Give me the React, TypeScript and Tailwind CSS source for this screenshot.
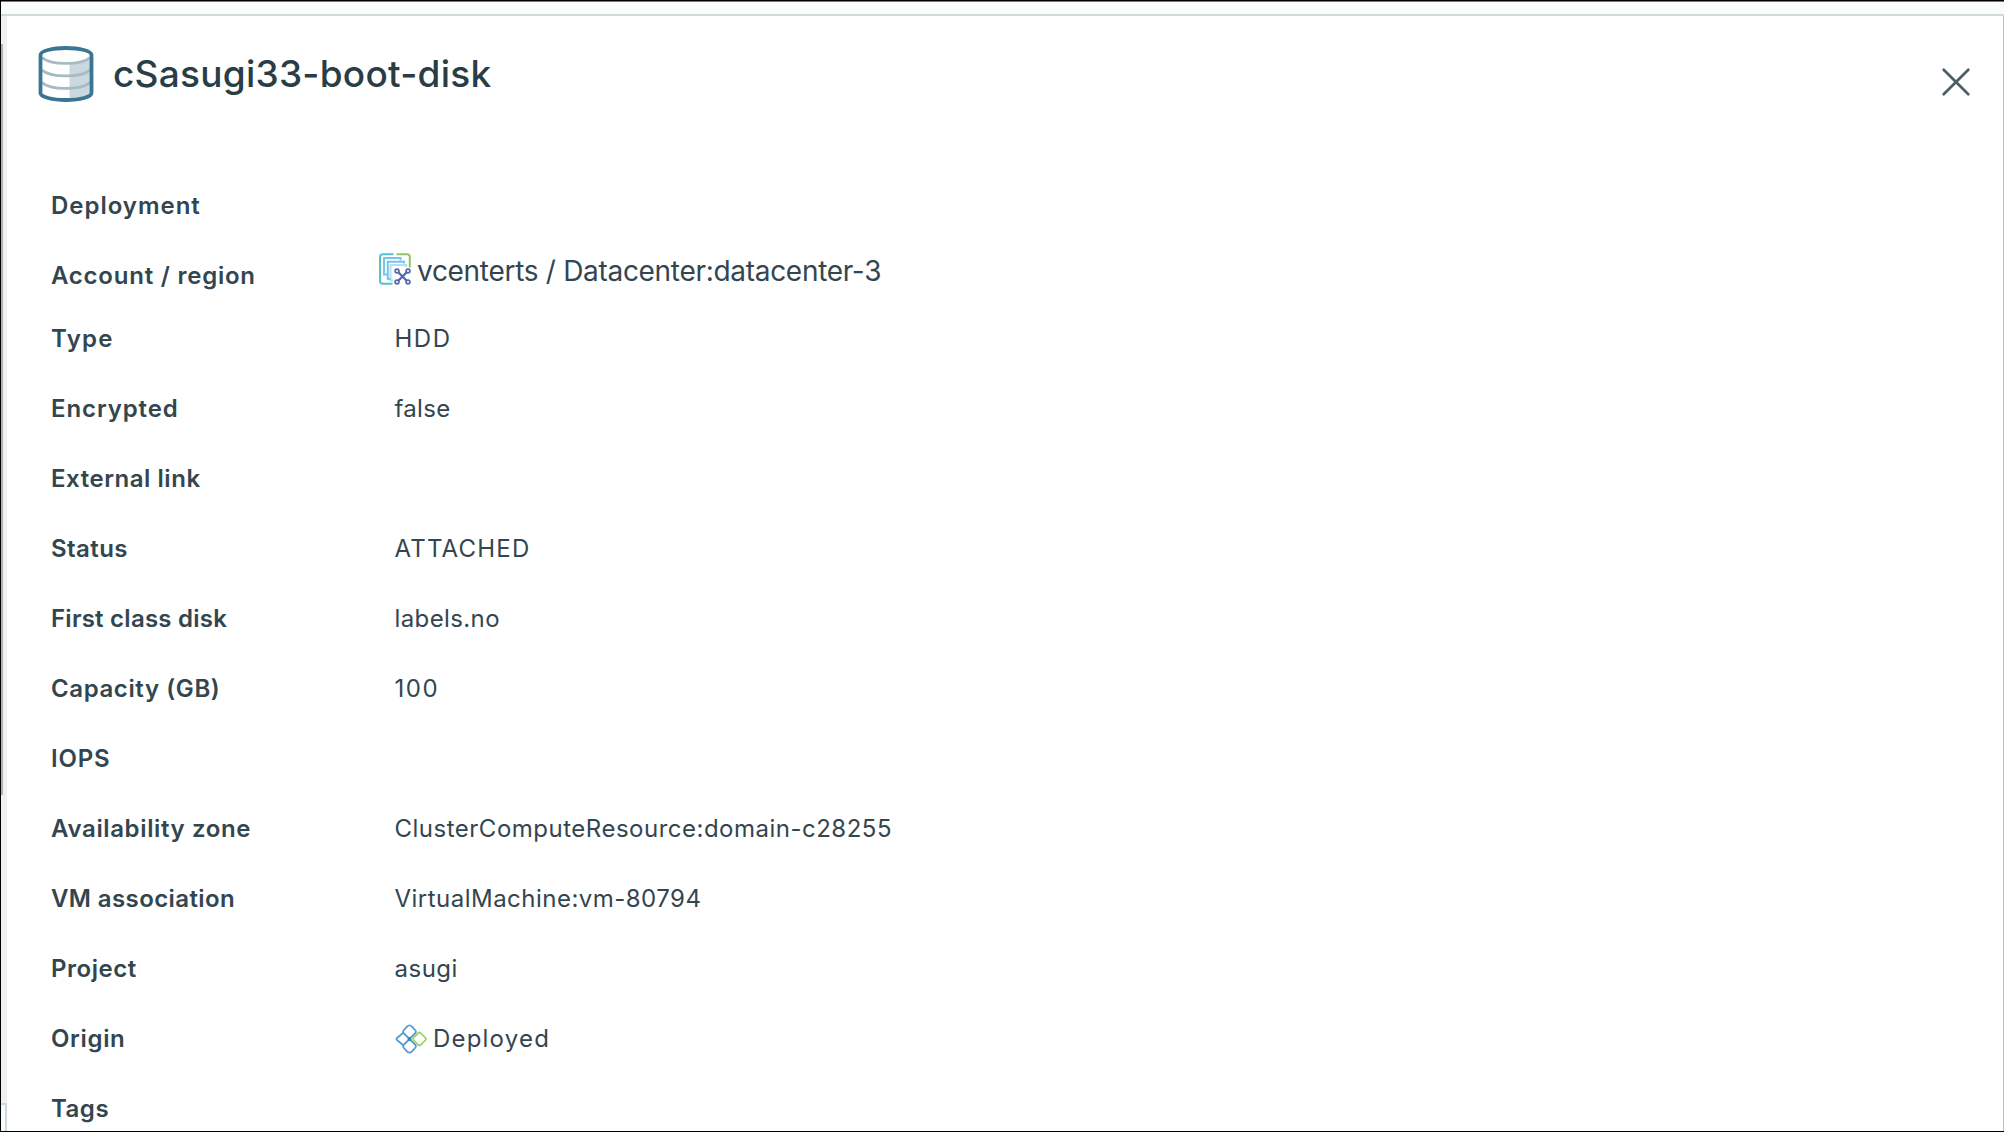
import type { ReactNode } from 'react';

function DiskIcon() {
  return (
    <svg width="56" height="56" viewBox="0 0 56 56" fill="none" className="shrink-0">
      <path d="M2.500 9C2.500 5 14 2 28 2S53.500 5 53.500 9v38c0 4-11.500 7-25.500 7S2.500 51 2.500 47Z" fill="#fff" />
      <path d="M31.500 17.200C40 16.600 48 14.600 53 11v36c-3 3.500-11 6-21.500 6.500Z" fill="#cbd8de" />
      <g stroke="#a7bbc5" strokeWidth="2.800">
        <path d="M4 11.500c4 4 13 5.900 24 5.900s20-1.900 24-5.900" />
        <path d="M4 24c4 4 13 5.900 24 5.900s20-1.900 24-5.900" />
        <path d="M4 36.500c4 4 13 5.900 24 5.900s20-1.900 24-5.900" />
      </g>
      <path d="M2.500 9C2.500 5 14 2 28 2S53.500 5 53.500 9v38c0 4-11.500 7-25.500 7S2.500 51 2.500 47Z" stroke="#3a7594" strokeWidth="3.800" />
    </svg>
  );
}

function VCenterIcon() {
  return (
    <svg width="32" height="32" viewBox="0 0 32 32" fill="none" className="shrink-0">
      <path d="M14.500 1.200H4A3 3 0 0 0 1 4.200v23.500a3 3 0 0 0 3 3h9.500" stroke="#4fc3d2" strokeWidth="2" />
      <path d="M17.500 1.200H28a2.800 2.800 0 0 1 2.800 2.800v10.500" stroke="#94c466" strokeWidth="2" />
      <g stroke="#78c4ec" strokeWidth="2">
        <path d="M21.500 7.500V5H5v16.500h3" />
        <path d="M25 10.500V8.700H8.800V26h3" />
        <path d="M27 14v-2H11.500v15.500H14" opacity=".55" />
      </g>
      <g stroke="#5468ae" strokeWidth="1.700">
        <path d="m19 19 9 9m0-9-9 9" strokeWidth="2.400" />
        <circle cx="18" cy="18" r="1.900" />
        <circle cx="29" cy="18" r="1.900" />
        <circle cx="18" cy="29" r="1.900" />
        <circle cx="29" cy="29" r="1.900" />
      </g>
    </svg>
  );
}

function DeployedIcon() {
  return (
    <svg width="32" height="30" viewBox="0 0 32 30" fill="none" strokeWidth="1.800" strokeLinejoin="round" className="shrink-0">
      <g stroke="#5a9bd0">
        <path d="M12 2.600Q14.500 0 17 2.600L20.500 6.500Q21.500 8 20.500 9L14.500 15 8.500 9Q7.500 8 8.500 6.500Z" />
        <path d="M12 27.400Q14.500 30 17 27.400L20.500 23.500Q21.500 22 20.500 21L14.500 15 8.500 21Q7.500 22 8.500 23.500Z" />
        <path d="M8.500 8.500 2 14Q1 15 2 16L8.500 21.500" />
      </g>
      <path d="M23.300 9Q24.500 8 25.700 9L30.500 14Q31.300 15 30.500 16L25.700 21Q24.500 22 23.300 21L18.500 16Q17.700 15 18.500 14Z" stroke="#98d65c" />
      <circle cx="14.500" cy="15" r="1.900" fill="#3a82bd" />
    </svg>
  );
}

function Row({ label, labelClass, children }: { label: string; labelClass: string; children?: ReactNode }) {
  return (
    <div className="flex h-[70.05px] items-center">
      <div className={`w-[343.5px] shrink-0 font-semibold ${labelClass}`}>{label}</div>
      {children}
    </div>
  );
}

export default function App() {
  return (
    <div className="flex h-[1132px] w-[2004px] flex-col overflow-hidden whitespace-nowrap border-b border-l border-t border-black bg-white font-['Inter',sans-serif] text-[24px] leading-[30px] text-[#33464f]">
      <div className="h-[15px] shrink-0 border-b-2 border-t border-b-[#cfdadf] border-t-[#777777] bg-[#fafcfb]" />
      <div className="flex min-h-0 flex-1 border-r border-[#bfbfbf]">
        <div className="flex w-[6px] shrink-0 flex-col bg-[#f1f0f1]">
          <div className="mt-7 h-[751px] w-[2px] bg-[#b5b1b3]" />
          <div className="mt-auto h-[28px] border-r-2 border-t-2 border-[#cdd9df] bg-[#f8fbfc]" />
        </div>
        <main className="flex-1">
          <header className="flex h-[155px] items-start pl-[31px] pr-[32px] pt-[30px]">
            <DiskIcon />
            <h1 className="ml-[19px] mt-[5px] flex-1 text-[37px] font-[450] leading-[46px] tracking-[0.25px] text-[#293d46]">cSasugi33-boot-disk</h1>
            <button aria-label="Close" className="mt-[20.5px]">
              <svg width="30" height="30" viewBox="0 0 30 30" stroke="#4c5d65" strokeWidth="2.700" strokeLinecap="round">
                <path d="m2.700 2.700 24.600 24.600m0-24.600-24.600 24.600" />
              </svg>
            </button>
          </header>
          <section className="pl-[44px]">
            <Row label="Deployment" labelClass="tracking-[0.97px]" />
            <div className="flex h-[62.5px] items-center">
              <div className="mt-2 w-[328px] shrink-0 font-semibold tracking-[0.77px]">Account / region</div>
              <div className="mb-[6px] flex"><VCenterIcon /></div>
              <span className="mb-[2px] ml-[6px] text-[28px] leading-[34px] tracking-[-0.3px]">vcenterts / Datacenter:datacenter-3</span>
            </div>
            <Row label="Type" labelClass="tracking-[1.3px]"><span className="tracking-[1.5px]">HDD</span></Row>
            <Row label="Encrypted" labelClass="tracking-[0.9px]"><span className="tracking-[0.3px]">false</span></Row>
            <Row label="External link" labelClass="tracking-[0.55px]" />
            <Row label="Status" labelClass="tracking-[0.44px]"><span className="tracking-[1.2px]">ATTACHED</span></Row>
            <Row label="First class disk" labelClass="tracking-[0.25px]"><span className="tracking-[0.39px]">labels.no</span></Row>
            <Row label="Capacity (GB)" labelClass="tracking-[0.6px]"><span className="tracking-[1.5px]">100</span></Row>
            <Row label="IOPS" labelClass="tracking-[0.8px]" />
            <Row label="Availability zone" labelClass="tracking-[0.63px]"><span className="tracking-[0.5px]">ClusterComputeResource:domain-c28255</span></Row>
            <Row label="VM association" labelClass="tracking-[0.4px]"><span className="tracking-[0.48px]">VirtualMachine:vm-80794</span></Row>
            <Row label="Project" labelClass="tracking-[0.55px]"><span className="tracking-[0.5px]">asugi</span></Row>
            <Row label="Origin" labelClass="tracking-[0.66px]">
              <DeployedIcon />
              <span className="ml-[6.5px] tracking-[1.2px]">Deployed</span>
            </Row>
            <Row label="Tags" labelClass="tracking-[0.5px]" />
          </section>
        </main>
      </div>
    </div>
  );
}
